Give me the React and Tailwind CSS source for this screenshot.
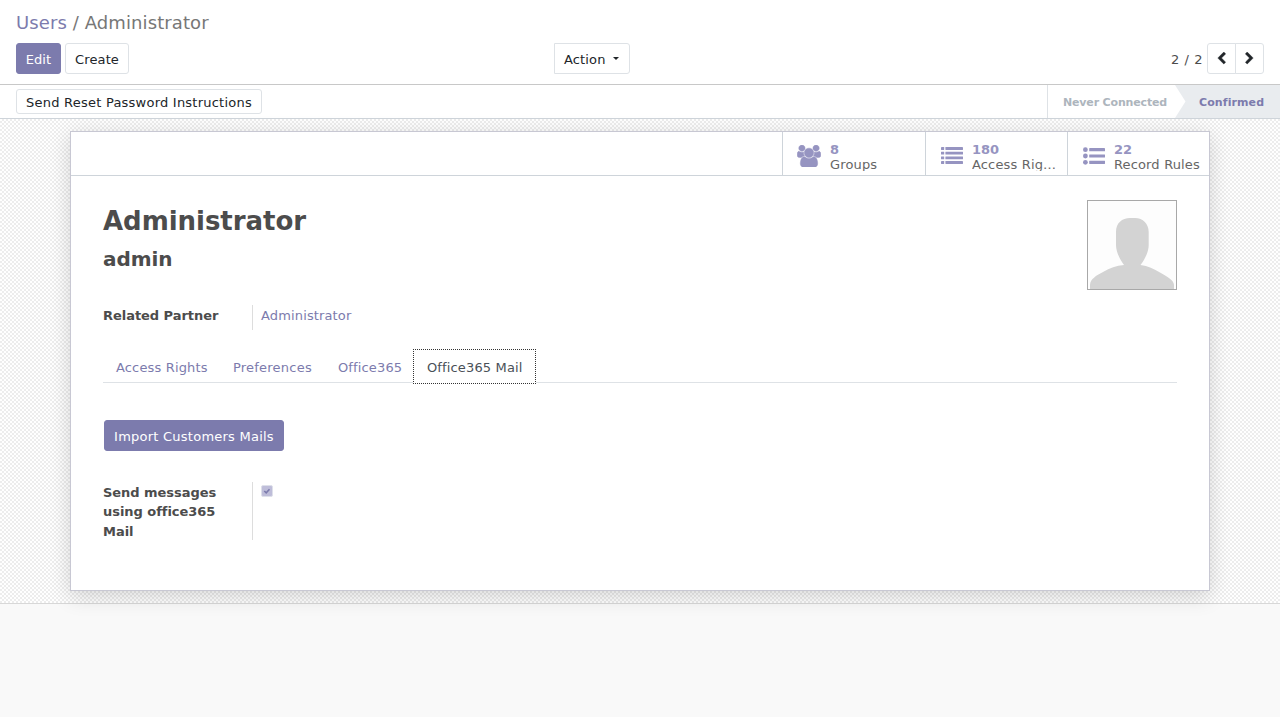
const FONT = 'font-["DejaVu_Sans",Verdana,sans-serif] tracking-[0.14px] [word-spacing:0.1px]';
const BOLD = "font-bold tracking-[-0.04px] [word-spacing:0px]";

function ChevronIcon({ flip }) {
  return (
    <svg viewBox="0 0 1792 1792" className={flip ? "h-[13px] w-[13px] -scale-x-100" : "h-[13px] w-[13px]"} fill="currentColor" stroke="currentColor" strokeWidth="60">
      <path d="M1427 301l-531 531 531 531q19 19 19 45t-19 45l-166 166q-19 19-45 19t-45-19l-742-742q-19-19-19-45t19-45l742-742q19-19 45-19t45 19l166 166q19 19 19 45t-19 45z" />
    </svg>
  );
}

function UsersIcon() {
  return (
    <svg viewBox="0 0 1920 1792" className="h-[22px] w-6" fill="currentColor" stroke="currentColor" strokeWidth="40">
      <path d="M593 896q-162 5-265 128h-134q-82 0-138-40.500t-56-118.500q0-353 124-353 6 0 43.500 21t97.500 42.500 119 21.500q67 0 133-23-5 37-5 66 0 139 81 256zm1071 637q0 120-73 189.500t-194 69.500h-874q-121 0-194-69.500t-73-189.500q0-53 3.500-103.500t14-109 26.500-108.500 43-97.500 62-81 85.500-53.500 111.500-20q10 0 43 21.500t73 48 107 48 135 21.500 135-21.500 107-48 73-48 43-21.500q61 0 111.500 20t85.500 53.500 62 81 43 97.500 26.500 108.500 14 109 3.500 103.500zm-1024-1277q0 106-75 181t-181 75-181-75-75-181 75-181 181-75 181 75 75 181zm704 384q0 159-112.500 271.500t-271.500 112.500-271.500-112.500-112.500-271.500 112.500-271.500 271.500-112.500 271.500 112.500 112.500 271.500zm576 225q0 78-56 118.500t-138 40.500h-134q-103-123-265-128 81-117 81-256 0-29-5-66 66 23 133 23 59 0 119-21.500t97.500-42.500 43.500-21q124 0 124 353zm-128-609q0 106-75 181t-181 75-181-75-75-181 75-181 181-75 181 75 75 181z" />
    </svg>
  );
}

function ListIcon() {
  return (
    <svg viewBox="0 0 24 22" className="h-[22px] w-6" fill="currentColor">
      {[2, 6.7, 11.4, 16.1].map((y) => (
        <g key={y}>
          <rect x="1" y={y} width="3.2" height="2.9" rx="0.4" />
          <rect x="5.4" y={y} width="17.6" height="2.9" rx="0.4" />
        </g>
      ))}
    </svg>
  );
}

function BulletsIcon() {
  return (
    <svg viewBox="0 0 24 22" className="h-[22px] w-6" fill="currentColor">
      {[4.7, 11, 17.3].map((y) => (
        <g key={y}>
          <circle cx="3.4" cy={y} r="2.4" />
          <rect x="7.2" y={y - 1.6} width="15.8" height="3.2" rx="0.4" />
        </g>
      ))}
    </svg>
  );
}

function StatButton({ icon, value, label, width, gap = "ml-2" }) {
  return (
    <div className={`flex h-[43px] items-start border-l border-[#ced4da] pl-[14px] ${width}`}>
      <span className="mt-[13px] flex h-[22px] w-6 shrink-0 text-[#9694c1]">{icon}</span>
      <div className={`${gap} min-w-0 pt-[10px] leading-[15px]`}>
        <div className={`${BOLD} text-[#9694c1]`}>{value}</div>
        <div className="h-[14px] w-[88px] truncate text-[#666]">{label}</div>
      </div>
    </div>
  );
}

function Avatar() {
  return (
    <svg viewBox="0 0 88 88" className="h-[90px] w-[90px] border border-[#a8a8a8] bg-[#fdfdfd]">
      <path fill="#d3d3d3" d="M2 88V84C2 78 9 74 15 71C22 67 28 64.500 36 64C31 57 28 50 28 44V31C28 22 34 17 42 17H47C55 17 60.700 23 60.700 31V44C60.700 51 57 58 52.500 64C60 65 66 68 72 71.500C79 75.500 86 79 86 84V88Z" />
    </svg>
  );
}

export default function App() {
  const button = "rounded-[3px] border text-[13px]";
  return (
    <div className={`${FONT} h-[717px] overflow-hidden bg-[#f9f9f9] text-[13px] leading-[19.5px] text-[#4c4c4c]`}>
      <header className="h-[85px] border-b border-[#c8c8c8] bg-white px-4 pt-[9px]">
        <div className="h-[34px] text-[18px] leading-[27px] tracking-[0.1px] text-[#777] [word-spacing:0px]">
          <span className="text-[#7c7bad]">Users</span> / Administrator
        </div>
        <div className="grid grid-cols-[538px_1fr_auto] text-[#212529]">
          <div className="flex gap-1">
            <button className={`${button} h-[31px] w-[45px] border-[#7c7bad] bg-[#7c7bad] pt-0.5 text-white`}>Edit</button>
            <button className={`${button} h-[31px] w-16 border-[#dee2e6] bg-white pt-0.5`}>Create</button>
          </div>
          <div>
            <button className={`${button} flex h-[31px] w-[76px] items-center rounded-l-none border-[#dee2e6] pt-0.5 pl-[9px]`}>
              Action
              <span className="-mt-[3px] ml-[7px] border-x-[3px] border-t-[3px] border-x-transparent border-t-current" />
            </button>
          </div>
          <div className="flex">
            <span className="mr-1 pt-[7px] tracking-[0.5px] text-[#4c4c4c]">2 / 2</span>
            <button className="flex h-[31px] w-[29px] items-center justify-center rounded-l-[3px] border border-[#dee2e6]"><ChevronIcon /></button>
            <button className="-ml-px flex h-[31px] w-[29px] items-center justify-center rounded-r-[3px] border border-[#dee2e6]"><ChevronIcon flip /></button>
          </div>
        </div>
      </header>

      <div className="flex h-[34px] justify-between border-b border-[#ced4da] bg-white pl-4">
        <button className={`${button} mt-1 h-[25px] w-[246px] border-[#dee2e6] pt-0.5 leading-[19px] tracking-[0.23px] whitespace-nowrap text-[#212529]`}>
          Send Reset Password Instructions
        </button>
        <div className="flex h-[33px] border-l border-[#dee2e6] text-[11px] leading-[35px] font-bold [word-spacing:0px]">
          <span className="w-[127px] pl-[15px] tracking-[-0.16px] whitespace-nowrap text-[#adb5bd]">Never Connected</span>
          <span className="flex w-[105px] bg-[#e9ecef] tracking-[0.1px] text-[#7c7bad]">
            <svg viewBox="0 0 11 33" className="mr-[13px] h-[33px] w-[11px]">
              <path d="M0 0L10.500 16.500L0 33Z" fill="#fff" />
            </svg>
            Confirmed
          </span>
        </div>
      </div>

      <div className="h-[485px] border-b border-[#d8d8d8] bg-[repeating-conic-gradient(#ededed_0_25%,#fff_0_50%)] bg-[length:4px_4px] px-[70px] pt-3">
        <main className="h-[460px] border border-[#c8c8d3] bg-white shadow-[0_5px_20px_rgba(0,0,0,0.16)]">
          <div className="flex h-11 justify-end border-b border-[#ced4da]">
            <StatButton icon={<UsersIcon />} value="8" label="Groups" width="w-[143px]" gap="ml-[9px]" />
            <StatButton icon={<ListIcon />} value="180" label="Access Rights" width="w-[142px]" />
            <StatButton icon={<BulletsIcon />} value="22" label="Record Rules" width="w-[142px]" />
          </div>
          <div className="px-8 pt-6">
            <div className="flex h-[105px] justify-between">
              <div>
                <h1 className={`${BOLD} pt-0.5 text-[26px] leading-[39px]`}>Administrator</h1>
                <h2 className={`${BOLD} mt-[3px] text-[20px] leading-[30px]`}>admin</h2>
              </div>
              <Avatar />
            </div>
            <div className="flex h-[25px] leading-[21px]">
              <div className={`${BOLD} w-[150px] border-r border-[#ddd]`}>Related Partner</div>
              <a className="pl-2 text-[#7c7bad]">Administrator</a>
            </div>
            <nav className="mt-[19px] flex h-[34px] border-b border-[#dee2e6] leading-[37px] whitespace-nowrap text-[#7c7bad]">
              <a className="w-[117px] pl-[13px]">Access Rights</a>
              <a className="w-[105px] pl-[13px] tracking-[0.22px]">Preferences</a>
              <a className="w-[88px] pl-[13px]">Office365</a>
              <a className="h-[35px] w-[123px] border border-dotted border-[#333] bg-white pl-[13px] leading-[35px] text-[#495057]">Office365 Mail</a>
            </nav>
            <button className={`${button} mt-[37px] ml-px h-[31px] w-[180px] border-[#7c7bad] bg-[#7c7bad] pt-0.5 tracking-[0.24px] whitespace-nowrap text-white`}>
              Import Customers Mails
            </button>
            <div className="mt-[31px] flex h-[58px]">
              <div className={`${BOLD} w-[150px] border-r border-[#ddd] pt-[0.5px] pr-5`}>Send messages using office365 Mail</div>
              <span className="mt-[3px] ml-2 flex h-3 w-3 items-center justify-center rounded-[2px] border border-[#dee0ea] bg-[#bebdd9]">
                <svg viewBox="0 0 8 8" className="h-2 w-2" fill="none" stroke="#7c7bad" strokeWidth="1.6">
                  <path d="M1.300 4L3.200 5.800L6.500 2.200" />
                </svg>
              </span>
            </div>
          </div>
        </main>
      </div>
    </div>
  );
}
